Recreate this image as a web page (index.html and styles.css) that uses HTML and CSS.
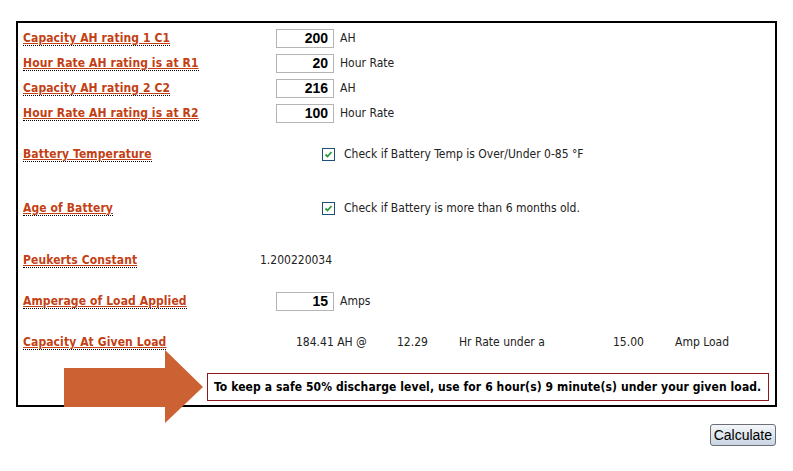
FILE: index.html
```html
<!DOCTYPE html>
<html>
<head>
<meta charset="utf-8">
<link rel="stylesheet" href="styles.css">
</head>
<body>
<div class="page">
  <div class="calc">
    <div class="row">
      <span class="label"><a class="lbl">Capacity AH rating 1 C1</a></span>
      <span class="field"><span class="num">200</span></span>
      <span class="unit">AH</span>
    </div>
    <div class="row">
      <span class="label"><a class="lbl">Hour Rate AH rating is at R1</a></span>
      <span class="field"><span class="num">20</span></span>
      <span class="unit">Hour Rate</span>
    </div>
    <div class="row">
      <span class="label"><a class="lbl">Capacity AH rating 2 C2</a></span>
      <span class="field"><span class="num">216</span></span>
      <span class="unit">AH</span>
    </div>
    <div class="row">
      <span class="label"><a class="lbl">Hour Rate AH rating is at R2</a></span>
      <span class="field"><span class="num">100</span></span>
      <span class="unit">Hour Rate</span>
    </div>
    <div class="row sp-21">
      <span class="label"><a class="lbl">Battery Temperature</a></span>
      <span class="check-wrap">
        <span class="cbox"><svg width="9" height="9" viewBox="0 0 9 9"><path d="M1.5 4.5 L3.5 6.5 L7.5 2" fill="none" stroke="#2a9a3a" stroke-width="1.8"/></svg></span>
        <span class="ctext">Check if Battery Temp is Over/Under 0-85 °F</span>
      </span>
    </div>
    <div class="row sp-34">
      <span class="label"><a class="lbl">Age of Battery</a></span>
      <span class="check-wrap">
        <span class="cbox"><svg width="9" height="9" viewBox="0 0 9 9"><path d="M1.5 4.5 L3.5 6.5 L7.5 2" fill="none" stroke="#2a9a3a" stroke-width="1.8"/></svg></span>
        <span class="ctext">Check if Battery is more than 6 months old.</span>
      </span>
    </div>
    <div class="row sp-32">
      <span class="label"><a class="lbl">Peukerts Constant</a></span>
      <span class="peuk">1.200220034</span>
    </div>
    <div class="row sp-21">
      <span class="label"><a class="lbl">Amperage of Load Applied</a></span>
      <span class="field"><span class="num">15</span></span>
      <span class="unit">Amps</span>
    </div>
    <div class="row sp-21">
      <span class="label"><a class="lbl">Capacity At Given Load</a></span>
      <span class="res r1">184.41 AH @</span>
      <span class="res r2">12.29</span>
      <span class="res r3">Hr Rate under a</span>
      <span class="res r4">15.00</span>
      <span class="res r5">Amp Load</span>
    </div>
    <div class="msg-row">
      <div class="msg">To keep a safe 50% discharge level, use for 6 hour(s) 9 minute(s) under your given load.</div>
    </div>
  </div>
  <div class="actions"><button class="btn">Calculate</button></div>
  <svg class="arrow" width="793" height="471" viewBox="0 0 793 471"><polygon points="64,368 165,368 165,350 203,387 165,423 165,407 64,407" fill="#cc6234"/></svg>
</div>
</body>
</html>
```
FILE: styles.css
```css
html, body { margin: 0; padding: 0; background: #fff; }
.page { position: relative; width: 793px; height: 471px; padding: 21px 0 0 16px; box-sizing: border-box; font-family: "DejaVu Sans Condensed", "DejaVu Sans", sans-serif; font-size: 12px; color: #222; }
.calc { width: 761px; height: 386px; border: 2px solid #000; box-sizing: border-box; padding: 5px 0 0 5px; display: flex; flex-direction: column; gap: 5px; }
.row { display: flex; align-items: center; height: 20px; flex: none; }
.sp-21 { margin-top: 16px; }
.sp-34 { margin-top: 29px; }
.sp-32 { margin-top: 27px; }
.label { width: 253px; flex: none; }
.lbl { color: #c43f14; font-weight: bold; letter-spacing: 0.1px; text-decoration: underline; text-decoration-color: #c43f14; border-bottom: 1px dotted #000; padding-bottom: 0; }
.field { width: 58px; height: 19px; border: 1px solid #b4b4b4; box-sizing: border-box; display: flex; align-items: center; justify-content: flex-end; padding-right: 5px; flex: none; }
.num { font-family: "Liberation Sans", Arial, sans-serif; font-weight: bold; font-size: 14px; color: #000; }
.unit { margin-left: 6px; }
.check-wrap { display: flex; align-items: center; margin-left: 46px; }
.cbox { width: 13px; height: 13px; border: 1px solid #1f4e79; box-sizing: border-box; background: #fff; display: flex; align-items: center; justify-content: center; }
.ctext { margin-left: 9px; }
.peuk { margin-left: -16px; }
.res { flex: none; }
.r1 { margin-left: 20px; width: 101px; }
.r2 { width: 62px; }
.r3 { width: 154px; }
.r4 { width: 62px; }
.msg-row { margin-top: 16px; padding-left: 184px; }
.msg { width: 562px; height: 28px; border: 1px solid #8b1a1a; box-sizing: border-box; display: flex; align-items: center; padding-left: 6px; font-weight: bold; letter-spacing: 0.1px; color: #000; }
.actions { width: 760px; display: flex; justify-content: flex-end; margin-top: 17px; }
.btn { font-family: "Liberation Sans", Arial, sans-serif; font-size: 14px; color: #000; height: 22px; padding: 0 3px; border: 1px solid #6a6f78; border-radius: 3px; background: linear-gradient(#f4f6f9, #dfe6ee 50%, #c9d5e3); }
.arrow { position: absolute; left: 0; top: 0; pointer-events: none; }
```
